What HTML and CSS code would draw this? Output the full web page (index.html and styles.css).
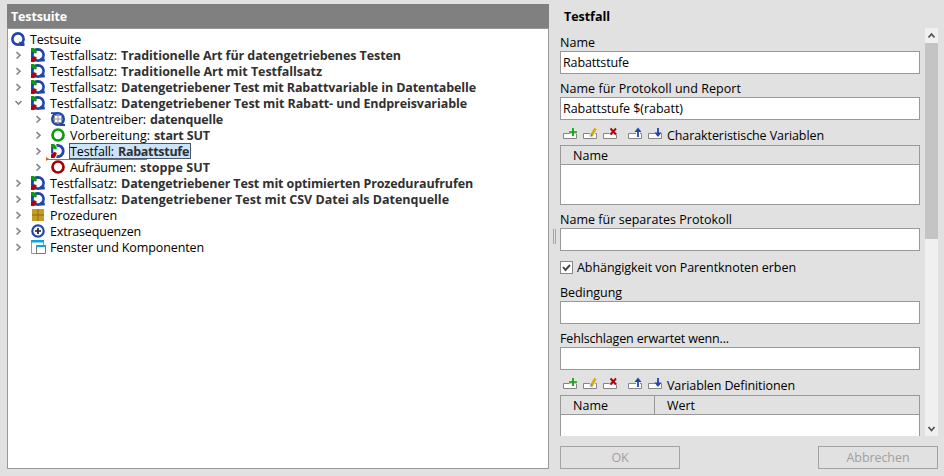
FILE: index.html
```html
<!DOCTYPE html>
<html lang="de">
<head>
<meta charset="utf-8">
<title>Testsuite</title>
<link rel="stylesheet" href="styles.css">
</head>
<body>
<svg class="defs" width="0" height="0" aria-hidden="true">
  <symbol id="suite" viewBox="0 0 16 16"><circle cx="8" cy="8" r="5.6" fill="none" stroke="#2145ad" stroke-width="2.6"/><path d="M9 10.5L14.5 12V15H10Z" fill="#2145ad"/></symbol>
  <symbol id="set" viewBox="0 0 16 16"><circle cx="8" cy="8" r="5.6" fill="none" stroke="#2145ad" stroke-width="2.6"/><path d="M1 4H3.2V12H1ZM5 1.4H9V3.4H5ZM9.5 12L12.5 10L14.8 12V14.6H10Z" fill="#2145ad"/><path d="M1 1H4L6.5 3.5L6.8 5.8L5 6.5L1 4Z" fill="#08a008"/><path d="M1 11.5L4.5 9.2L6.8 10.5L6 12.5L4.5 15H1Z" fill="#b00010"/></symbol>
  <symbol id="case" viewBox="0 0 16 16"><path d="M6.5 2.4A5.7 5.7 0 1 1 6.5 13.6" fill="none" stroke="#2145ad" stroke-width="2.8"/><path d="M2.2 4V10.5" stroke="#2145ad" stroke-width="2.2"/><path d="M1 1H4L6.5 3.5L6.8 5.8L5 6.5L1 4Z" fill="#08a008"/><path d="M1 11.5L4.5 8.8L6.8 10L6 12.5L4.5 15H1Z" fill="#b00010"/></symbol>
  <symbol id="driver" viewBox="0 0 16 16"><circle cx="8" cy="8" r="5.7" fill="none" stroke="#2145ad" stroke-width="2.6"/><path d="M10 12.5L15 13V15H10ZM1 1.3H8V3H1Z" fill="#2145ad"/><path d="M4.5 4.5H11.5V11.5H4.5ZM4.5 8H11.5M8 4.5V11.5" fill="#fff" stroke="#999"/></symbol>
  <symbol id="ring" viewBox="0 0 16 16"><circle cx="8" cy="8" r="5.5" fill="none" stroke="currentColor" stroke-width="2.7"/></symbol>
  <symbol id="proc" viewBox="0 0 16 16"><path d="M2 2H14V14H2Z" fill="#c89c20"/><path d="M2 8H14M8 2V14" stroke="#8a6814"/></symbol>
  <symbol id="extra" viewBox="0 0 16 16"><circle cx="8" cy="8" r="5.7" fill="#fff" stroke="#2145ad" stroke-width="2.2"/><path d="M5 8H11M8 5V11" stroke="#222" stroke-width="1.7"/></symbol>
  <symbol id="windows" viewBox="0 0 16 16"><path d="M1.5 1.5H13.5V14.5H1.5Z" fill="#fff" stroke="#999"/><path d="M1 1H14V3.5H1Z" fill="#0ba5df"/><path d="M6.5 7.5H15.5V14.5H6.5Z" fill="#fff" stroke="#777"/><path d="M6 6H16V8H6Z" fill="#0ba5df"/></symbol>
  <symbol id="open" viewBox="0 0 16 16"><path d="M5.5 6L8.5 9L11.5 6" fill="none" stroke="#858585" stroke-width="1.6"/></symbol>
  <symbol id="closed" viewBox="0 0 16 16"><path d="M6.5 5L10 8.3L6.5 11.5" fill="none" stroke="#858585" stroke-width="1.6"/></symbol>
  <symbol id="add" viewBox="0 0 16 16"><use href="#box"/><path d="M7 5H15M11 1V9" stroke="#e2f0e2" stroke-width="3"/><path d="M7 5H15M11 1V9" stroke="#06a006" stroke-width="1.7"/></symbol>
  <symbol id="box" viewBox="0 0 16 16"><path d="M1.5 6.5H14.5V11.5H1.5Z" fill="#fff" stroke="#858585"/></symbol>
  <symbol id="edit" viewBox="0 0 16 16"><use href="#box"/><path d="M8.5 10L13.5 1.5" stroke="#e1e1e1" stroke-width="4.5"/><path d="M9.5 8L13.5 1.5" stroke="#d9a900" stroke-width="2.5"/><path d="M8.5 10L9 7L11 8.3Z" fill="#777"/></symbol>
  <symbol id="del" viewBox="0 0 16 16"><use href="#box"/><path d="M7.5 1H14.5V8H7.5Z" fill="#e1e1e1"/><path d="M8.5 1.5L14 7.5M14 1.5L8.5 7.5" stroke="#b30008" stroke-width="1.9"/></symbol>
  <symbol id="up" viewBox="0 0 16 16"><use href="#box"/><path d="M9 5H13V10H9Z" fill="#fff"/><path d="M11 10V2" stroke="#2145ad" stroke-width="1.8"/><path d="M7.5 5L11 .5L14.5 5Z" fill="#2145ad"/></symbol>
  <symbol id="down" viewBox="0 0 16 16"><use href="#box"/><path d="M9 5H13V9H9Z" fill="#e1e1e1"/><path d="M11 1V8" stroke="#2145ad" stroke-width="1.8"/><path d="M7.5 5.5H14.5L11 10Z" fill="#2145ad"/></symbol>
</svg>
<main class="app">
  <section class="tree-panel">
    <h2 class="tree-title"><span data-w="56">Testsuite</span></h2>
    <div class="tree">
      <div class="row root"><svg class="icon"><use href="#suite"/></svg><span class="label"><span data-w="51">Testsuite</span></span></div>
      <div class="row"><svg class="icon"><use href="#closed"/></svg><svg class="icon kind"><use href="#set"/></svg><span class="label"><span data-w="67">Testfallsatz:</span><b data-w="280">Traditionelle Art für datengetriebenes Testen</b></span></div>
      <div class="row"><svg class="icon"><use href="#closed"/></svg><svg class="icon kind"><use href="#set"/></svg><span class="label"><span data-w="67">Testfallsatz:</span><b data-w="201">Traditionelle Art mit Testfallsatz</b></span></div>
      <div class="row"><svg class="icon"><use href="#closed"/></svg><svg class="icon kind"><use href="#set"/></svg><span class="label"><span data-w="67">Testfallsatz:</span><b data-w="355">Datengetriebener Test mit Rabattvariable in Datentabelle</b></span></div>
      <div class="row"><svg class="icon"><use href="#open"/></svg><svg class="icon kind"><use href="#set"/></svg><span class="label"><span data-w="67">Testfallsatz:</span><b data-w="346">Datengetriebener Test mit Rabatt- und Endpreisvariable</b></span></div>
      <div class="row child"><svg class="icon"><use href="#closed"/></svg><svg class="icon kind"><use href="#driver"/></svg><span class="label"><span data-w="76">Datentreiber:</span><b data-w="73">datenquelle</b></span></div>
      <div class="row child"><svg class="icon"><use href="#closed"/></svg><svg class="icon kind green"><use href="#ring"/></svg><span class="label"><span data-w="80">Vorbereitung:</span><b data-w="56">start SUT</b></span></div>
      <div class="row child"><svg class="icon"><use href="#closed"/></svg><svg class="icon kind"><use href="#case"/></svg><span class="label selected"><span data-w="44">Testfall:</span><b data-w="71">Rabattstufe</b></span><i class="insert-mark"></i></div>
      <div class="row child"><svg class="icon"><use href="#closed"/></svg><svg class="icon kind red"><use href="#ring"/></svg><span class="label"><span data-w="66">Aufräumen:</span><b data-w="70">stoppe SUT</b></span></div>
      <div class="row"><svg class="icon"><use href="#closed"/></svg><svg class="icon kind"><use href="#set"/></svg><span class="label"><span data-w="67">Testfallsatz:</span><b data-w="352">Datengetriebener Test mit optimierten Prozeduraufrufen</b></span></div>
      <div class="row"><svg class="icon"><use href="#closed"/></svg><svg class="icon kind"><use href="#set"/></svg><span class="label"><span data-w="67">Testfallsatz:</span><b data-w="328">Datengetriebener Test mit CSV Datei als Datenquelle</b></span></div>
      <div class="row"><svg class="icon"><use href="#closed"/></svg><svg class="icon kind"><use href="#proc"/></svg><span class="label"><span data-w="67">Prozeduren</span></span></div>
      <div class="row"><svg class="icon"><use href="#closed"/></svg><svg class="icon kind"><use href="#extra"/></svg><span class="label"><span data-w="91">Extrasequenzen</span></span></div>
      <div class="row"><svg class="icon"><use href="#closed"/></svg><svg class="icon kind"><use href="#windows"/></svg><span class="label"><span data-w="154">Fenster und Komponenten</span></span></div>
    </div>
  </section>
  <div class="splitter"></div>
  <section class="details">
    <h2 class="detail-title"><span data-w="46">Testfall</span></h2>
    <div class="viewport">
      <form class="fields">
        <div class="caption first"><span data-w="35">Name</span></div>
        <div class="field"><span data-w="66">Rabattstufe</span></div>
        <div class="caption"><span data-w="181">Name für Protokoll und Report</span></div>
        <div class="field"><span data-w="120">Rabattstufe $(rabatt)</span></div>
        <div class="tools"><svg class="icon"><use href="#add"/></svg><svg class="icon"><use href="#edit"/></svg><svg class="icon"><use href="#del"/></svg><svg class="icon gap"><use href="#up"/></svg><svg class="icon"><use href="#down"/></svg><span class="tools-label" data-w="157">Charakteristische Variablen</span></div>
        <div class="table"><div class="thead"><div class="th"><span data-w="35">Name</span></div></div></div>
        <div class="caption"><span data-w="172">Name für separates Protokoll</span></div>
        <div class="field"></div>
        <div class="check"><span class="box"><svg viewBox="0 0 11 11"><path d="M2 5L4.5 8L9 3" fill="none" stroke="#444" stroke-width="1.9"/></svg></span><span data-w="219">Abhängigkeit von Parentknoten erben</span></div>
        <div class="caption"><span data-w="62">Bedingung</span></div>
        <div class="field"></div>
        <div class="caption"><span data-w="169">Fehlschlagen erwartet wenn...</span></div>
        <div class="field"></div>
        <div class="tools"><svg class="icon"><use href="#add"/></svg><svg class="icon"><use href="#edit"/></svg><svg class="icon"><use href="#del"/></svg><svg class="icon gap"><use href="#up"/></svg><svg class="icon"><use href="#down"/></svg><span class="tools-label" data-w="128">Variablen Definitionen</span></div>
        <div class="table"><div class="thead"><div class="th narrow"><span data-w="35">Name</span></div><div class="th"><span data-w="28">Wert</span></div></div></div>
      </form>
      <div class="scrollbar"><svg viewBox="0 0 13 15"><path d="M3.5 9.5L6.5 6L9.5 9.5" fill="none" stroke="#505050" stroke-width="1.7"/></svg><div class="thumb"></div><svg class="end" viewBox="0 0 13 15"><path d="M3.5 6L6.5 9.5L9.5 6" fill="none" stroke="#505050" stroke-width="1.7"/></svg></div>
    </div>
    <div class="actions"><div class="button"><span data-w="17">OK</span></div><div class="button"><span data-w="63">Abbrechen</span></div></div>
  </section>
</main>
<script src="fit.js"></script>
</body>
</html>
```
FILE: styles.css
```css
* { box-sizing: border-box; }
body { margin: 0; background: #e1e1e1; color: #000; font: 12.5px/18px "Open Sans", "Noto Sans", sans-serif; }
.defs { position: absolute; }
.app { display: flex; width: 944px; height: 476px; padding: 4px 6px 7px 7px; overflow: hidden; white-space: nowrap; }
.tree-panel { width: 542px; border: 1px solid #999; background: #fff; }
h2 { margin: 0; font-size: 12.5px; font-weight: 700; }
.tree-title { height: 25px; margin: -1px -1px 0; padding: 4px 0 0 4px; border-bottom: 1px solid #999; background: #808080; color: #fff; }
.tree { padding: 2px 0 0 2px; }
.row { display: flex; height: 16px; position: relative; }
.icon { width: 16px; height: 16px; flex: none; display: block; }
.kind { margin-left: 4px; }
.child { padding-left: 20px; }
.green { color: #08a008; }
.red { color: #a50008; }
.label { display: flex; gap: 4px; height: 16px; padding-left: 4px; }
.label b { color: #303030; }
.selected { margin-left: 3px; padding: 0 2px 0 1px; background: #cce4fa; box-shadow: inset 0 0 0 1px #46566b; }
.insert-mark { position: absolute; left: 36px; top: 16px; width: 101px; height: 1px; background: #e05a20; z-index: 1; }
.insert-mark::before { content: ""; position: absolute; left: 0; top: -2px; border: solid transparent; border-width: 2.5px 0 2.5px 3px; border-left-color: #e05a20; }
.splitter { width: 11px; padding: 225px 0 0 4px; }
.splitter::before { content: ""; display: block; width: 1px; height: 15px; border: solid #a5a5a5; border-width: 0 1px; }
.details { width: 378px; }
.detail-title { height: 24px; padding: 4px 0 0 4px; }
.viewport { display: flex; justify-content: space-between; height: 408px; overflow: hidden; }
.fields { width: 360px; }
.caption { height: 23px; padding-top: 6px; }
.field { height: 23px; border: 1px solid #999; background: #fff; padding: 2px; }
.tools { display: flex; height: 25px; padding: 7px 0 0 2px; gap: 4px; }
.tools .gap { margin-left: 5px; }
.table { height: 60px; border: 1px solid #999; background: #fff; }
.thead { display: flex; height: 19px; border-bottom: 1px solid #999; background: #e1e1e1; }
.th { flex: 1; padding: 1px 0 0 12px; }
.narrow { flex: 0 0 94px; border-right: 1px solid #999; }
.check { display: flex; gap: 4px; height: 27px; padding-top: 8px; }
.box { width: 13px; height: 13px; margin-top: 2px; border: 1px solid #888; background: #fff; }
.box svg { display: block; }
.scrollbar { display: flex; flex-direction: column; width: 13px; background: #f0f0f0; }
.scrollbar svg { width: 13px; height: 15px; }
.thumb { height: 196px; background: #c4c4c4; }
.end { margin-top: auto; }
.actions { display: flex; justify-content: space-between; padding-top: 10px; }
.button { width: 120px; height: 23px; border: 1px solid #a3a3a3; color: #a0a0a0; padding-top: 2px; text-align: center; }
```
FILE: fit.js
```js
document.querySelectorAll('[data-w]').forEach(function (el) {
  var range = document.createRange();
  range.selectNodeContents(el);
  var natural = range.getBoundingClientRect().width;
  var spacing = (Number(el.dataset.w) - natural) / el.textContent.length;
  el.style.letterSpacing = spacing + 'px';
});
```
